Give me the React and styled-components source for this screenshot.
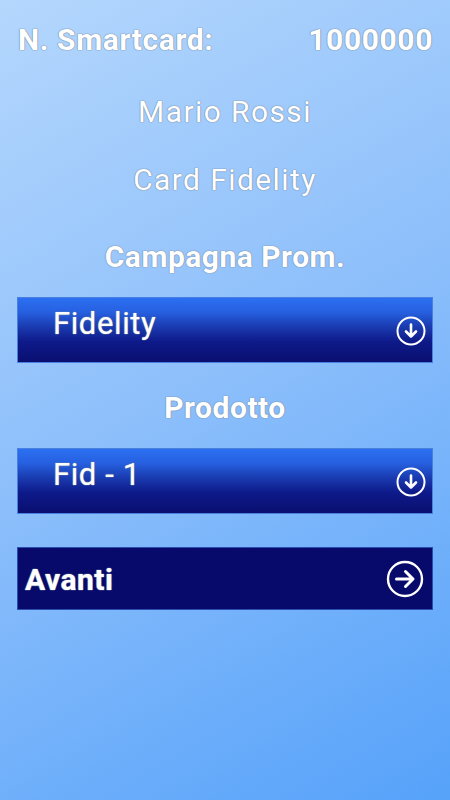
import React from 'react';
import styled, { createGlobalStyle } from 'styled-components';

const Global = createGlobalStyle`
  html, body { margin: 0; padding: 0; }
  body { font-family: Roboto, "Noto Sans", sans-serif; }
`;

const Screen = styled.div`
  width: 450px;
  min-height: 800px;
  box-sizing: border-box;
  padding: 0 17px;
  display: flex;
  flex-direction: column;
  background: linear-gradient(150deg, #b4d7fd 0%, #8fc0fb 45%, #56a2fa 100%);
  overflow: hidden;
`;

const outline = `
  text-shadow: 0 0 1px #7d8ea5, 0 0 1px #7d8ea5, 0 0 1px #7d8ea5;
`;

const HeaderRow = styled.div`
  display: flex;
  justify-content: space-between;
  align-items: baseline;
  margin-top: 21px;
  height: 38px;
  line-height: 38px;
  padding: 0 0 0 1px;
  font-size: 30px;
  font-weight: 700;
  letter-spacing: 0.6px;
  color: #fff;
  ${outline}
`;

const InfoLine = styled.div`
  text-align: center;
  font-size: 30px;
  font-weight: 400;
  letter-spacing: 1.4px;
  color: #fff;
  height: 36px;
  line-height: 36px;
  margin-top: ${p => p.$gap}px;
  ${outline}
`;

const Label = styled.div`
  text-align: center;
  font-size: 30px;
  font-weight: 700;
  letter-spacing: 0.5px;
  color: #fff;
  height: 36px;
  line-height: 36px;
  margin-top: ${p => p.$gap}px;
  ${outline}
`;

const Select = styled.div`
  margin-top: ${p => p.$gap}px;
  height: 66px;
  box-sizing: border-box;
  border: 1px solid #4a7fe0;
  background: linear-gradient(180deg, #2b70f2 0%, #2660e0 22%, #1a3bb0 45%, #0e1a8a 68%, #0a0f70 100%);
  display: flex;
  align-items: flex-start;
  justify-content: space-between;
  padding: 7px 6px 0 35px;
  color: #fff;
`;

const SelectText = styled.span`
  font-size: 31px;
  line-height: 38px;
  letter-spacing: 0.6px;
  ${outline}
`;

const SelectIcon = styled.svg`
  margin-top: 11px;
  width: 30px;
  height: 30px;
`;

const Button = styled.div`
  margin-top: 33px;
  height: 63px;
  box-sizing: border-box;
  background: #070a6a;
  border: 1px solid #2c4db0;
  display: flex;
  align-items: center;
  justify-content: space-between;
  padding: 0 8px 0 7px;
  color: #fff;
`;

const ButtonText = styled.span`
  font-size: 30px;
  font-weight: 700;
  letter-spacing: 0.5px;
  margin-top: 2px;
  ${outline}
`;

const DownIcon = () => (
  <SelectIcon viewBox="0 0 30 30" fill="none" stroke="#fff" strokeWidth="2" strokeLinecap="round" strokeLinejoin="round">
    <circle cx="15" cy="15" r="13.5" />
    <path d="M15 8.5v12M10 15.5l5 5 5-5" strokeWidth="2.6" />
  </SelectIcon>
);

const NextIcon = () => (
  <svg width="38" height="38" viewBox="0 0 38 38" fill="none" stroke="#fff" strokeLinecap="round" strokeLinejoin="round">
    <circle cx="19" cy="19" r="17" strokeWidth="2.4" />
    <path d="M10.5 19h16M19.5 11.5l7.5 7.5-7.5 7.5" strokeWidth="3" />
  </svg>
);

export default function App() {
  return (
    <Screen>
      <Global />
      <HeaderRow>
        <span>N. Smartcard:</span>
        <span>1000000</span>
      </HeaderRow>
      <InfoLine $gap={35}>Mario Rossi</InfoLine>
      <InfoLine $gap={32}>Card Fidelity</InfoLine>
      <Label $gap={41}>Campagna Prom.</Label>
      <Select $gap={22}>
        <SelectText>Fidelity</SelectText>
        <DownIcon />
      </Select>
      <Label $gap={27}>Prodotto</Label>
      <Select $gap={22}>
        <SelectText>Fid - 1</SelectText>
        <DownIcon />
      </Select>
      <Button>
        <ButtonText>Avanti</ButtonText>
        <NextIcon />
      </Button>
    </Screen>
  );
}
